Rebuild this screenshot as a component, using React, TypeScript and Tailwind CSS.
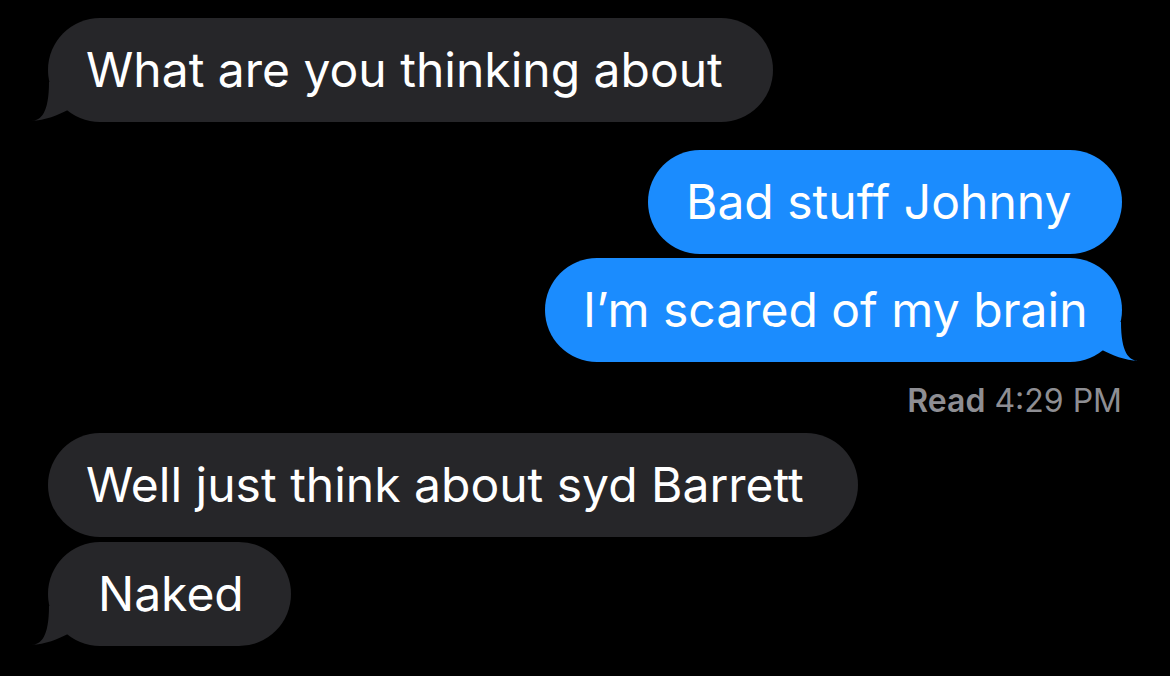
type Side = "in" | "out";

function Tail({ side, color }: { side: Side; color: string }) {
  const pos = side === "in" ? "left-[-17px]" : "right-[-17px] scale-x-[-1]";
  return (
    <svg
      className={`absolute bottom-0 ${pos}`}
      width="40"
      height="50"
      viewBox="0 0 40 50"
    >
      <path
        d="M0.5 49 C10 48.5 18 41 18 10 L38 10 L38 37.5 C27 43 14 48.5 0.5 49 Z"
        fill={color}
      />
    </svg>
  );
}

function Bubble({
  text,
  side,
  width,
  tail,
  className = "",
}: {
  text: string;
  side: Side;
  width: string;
  tail?: boolean;
  className?: string;
}) {
  const color = side === "in" ? "#262629" : "#1b8cfe";
  return (
    <div
      className={`relative h-[104px] rounded-[52px] flex items-center pl-[38px] text-white text-[48px] leading-none whitespace-nowrap ${width} ${className}`}
      style={{ backgroundColor: color }}
    >
      {tail && <Tail side={side} color={color} />}
      <span className="relative">{text}</span>
    </div>
  );
}

export default function App() {
  return (
    <div
      className="w-[1170px] h-[676px] bg-black overflow-hidden flex flex-col px-[48px] pt-[18px]"
      style={{ fontFamily: "Inter, 'Noto Sans', sans-serif" }}
    >
      <div className="flex flex-col items-start">
        <Bubble side="in" tail width="w-[725px]" text="What are you thinking about" />
      </div>

      <div className="flex flex-col items-end gap-[4px] mt-[28px]">
        <Bubble side="out" width="w-[474px]" text="Bad stuff Johnny" />
        <Bubble side="out" tail width="w-[577px]" text="I’m scared of my brain" />
        <div className="mt-[16px] text-[32px] leading-[38px] text-[#8e8e93]">
          <span className="font-semibold">Read</span> 4:29 PM
        </div>
      </div>

      <div className="flex flex-col items-start gap-[5px] mt-[13px]">
        <Bubble side="in" width="w-[810px]" text="Well just think about syd Barrett" />
        <Bubble side="in" tail width="w-[243px]" className="!pl-[50px]" text="Naked" />
      </div>
    </div>
  );
}
